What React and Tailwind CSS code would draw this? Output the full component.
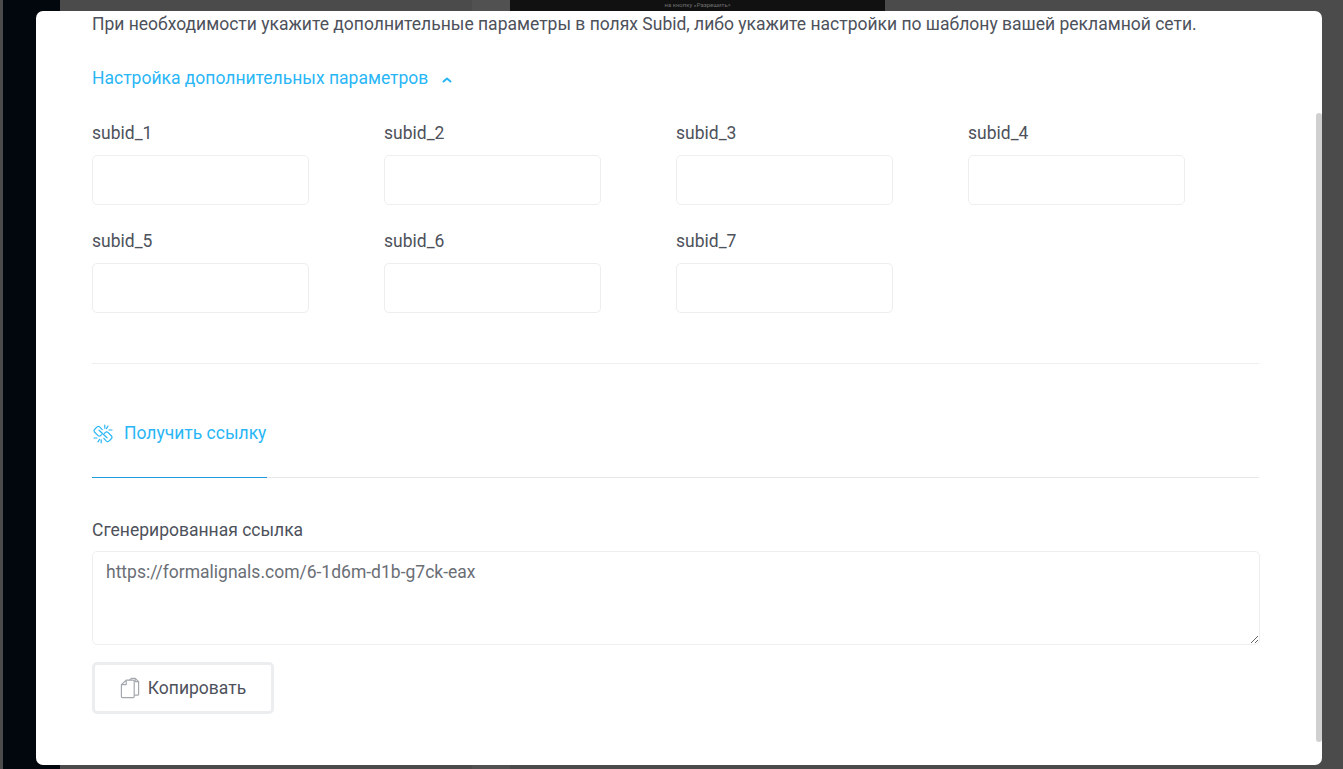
import React from "react";

const labelClass = "block text-[17.5px] leading-[21px] text-[#4d515b]";
const inputClass = "block w-[217px] h-[50px] rounded-[5px] border border-[#eceef0] bg-white";

const SubidField = ({ name }) => (
  <div className="w-[217px]">
    <label className={`${labelClass} mb-[11px]`}>{name}</label>
    <input type="text" className={inputClass} />
  </div>
);

const LinkIcon = () => (
  <svg className="shrink-0" width="22" height="22" viewBox="0 0 22 22" fill="none" stroke="#29b6f6" strokeWidth="1.2" strokeLinecap="round" strokeLinejoin="round">
    <path d="M10.2 6.6 7.6 3.9a1.8 1.8 0 0 0-2.5 0L2.5 6.5a1.8 1.8 0 0 0 0 2.5l3.6 3.6a1.8 1.8 0 0 0 2.5 0l1-1" />
    <path d="M11.8 15.4l2.6 2.7a1.8 1.8 0 0 0 2.5 0l2.6-2.6a1.8 1.8 0 0 0 0-2.5l-3.6-3.6a1.8 1.8 0 0 0-2.5 0l-1 1" />
    <path d="M7 7.2l8 7.6" />
    <path d="M12.8 2.2v3M16 3.2l-1.6 2.4M20 7h-3M2 15h3M6 18.8l1.6-2.4M9.2 19.8v-3" />
  </svg>
);

const CopyIcon = () => (
  <svg className="shrink-0" width="20" height="22" viewBox="0 0 20 22" fill="none" stroke="#a4a8ae" strokeWidth="1.2" strokeLinejoin="round">
    <path d="M1.4 7.6 6.2 3.2h7a1 1 0 0 1 1 1v15.4a1 1 0 0 1-1 1H2.4a1 1 0 0 1-1-1z" />
    <path d="M1.4 7.6h4.8V3.2" />
    <path d="M9.5 3.2 11.4 1.4h3.8l3.4 3.2v12.6a1 1 0 0 1-1 1h-3.4" />
    <path d="M15.2 1.4v3.2h3.4" />
  </svg>
);

const App = () => {
  return (
    <div className="relative w-[1343px] h-[769px] overflow-hidden bg-[#4b4b4b] font-['Roboto',sans-serif]">
      {/* page behind the modal */}
      <div className="flex h-full">
        <div className="w-[3px] bg-[#4b4b4b]" />
        <div className="w-[57px] bg-[#02060d]" />
        <div className="w-[412px] bg-[#4b4b4c]" />
        <div className="w-[38px] bg-[#515152]" />
        <div className="w-[375px] h-[11px] bg-[#111111] flex justify-center">
          <span className="text-[6px] leading-[10px] text-[#6f6f6f]">на кнопку «Разрешить»</span>
        </div>
      </div>

      {/* modal */}
      <div className="absolute left-[36px] top-[11px] w-[1286px] h-[754px] rounded-[7px] bg-white overflow-hidden">
        <div className="pl-[56px] pr-[63px]">
          <p className="text-[17.5px] leading-[21px] text-[#4d515b] pt-[3px]">
            При необходимости укажите дополнительные параметры в полях Subid, либо укажите настройки по шаблону вашей рекламной сети.
          </p>
          <div className="flex items-center mt-[33px] text-[#29b6f6] text-[17.5px] leading-[21px]">
            <span>Настройка дополнительных параметров</span>
            <svg className="ml-[13px] mt-[2px]" width="12" height="8" viewBox="0 0 12 8" fill="none" stroke="#29b6f6" strokeWidth="2" strokeLinecap="round" strokeLinejoin="round">
              <path d="M2.5 5.5 6 2.5l3.5 3" />
            </svg>
          </div>

          <div className="grid grid-cols-[217px_217px_217px_217px] gap-x-[75px] gap-y-[26px] mt-[34px]">
            {[1, 2, 3, 4, 5, 6, 7].map((n) => (
              <SubidField key={n} name={`subid_${n}`} />
            ))}
          </div>

          <div className="border-t border-[#eceef0] mt-[50px]" />

          <div className="border-b border-[#e6e8ea] mt-[40px]">
            <div className="inline-flex items-center align-top w-[175px] h-[74px] -mb-px border-b border-[#1e9bdc] text-[#29b6f6] pb-[14px]">
              <LinkIcon />
              <span className="ml-[10px] whitespace-nowrap text-[17.5px] leading-[21px]">Получить ссылку</span>
            </div>
          </div>

          <label className={`${labelClass} mt-[42px] mb-[10px]`}>Сгенерированная ссылка</label>
          <textarea
            readOnly
            value="https://formalignals.com/6-1d6m-d1b-g7ck-eax"
            className="block w-[1168px] h-[94px] rounded-[5px] border border-[#eceef0] bg-white px-[13px] py-[8px] text-[17.5px] leading-[24px] text-[#6a6e75] outline-none font-['Roboto',sans-serif]"
          />
          <button className="flex items-center justify-center w-[182px] h-[52px] mt-[17px] rounded-[5px] border-[3px] border-[#ecedef] bg-white text-[17.5px] text-[#4d515b]">
            <CopyIcon />
            <span className="ml-[8px]">Копировать</span>
          </button>
        </div>

        {/* scrollbar thumb */}
        <div className="absolute right-0 top-[102px] w-[6px] h-[629px] rounded-[3px] bg-[#d0d0d0]" />
      </div>
    </div>
  );
};

export default App;
